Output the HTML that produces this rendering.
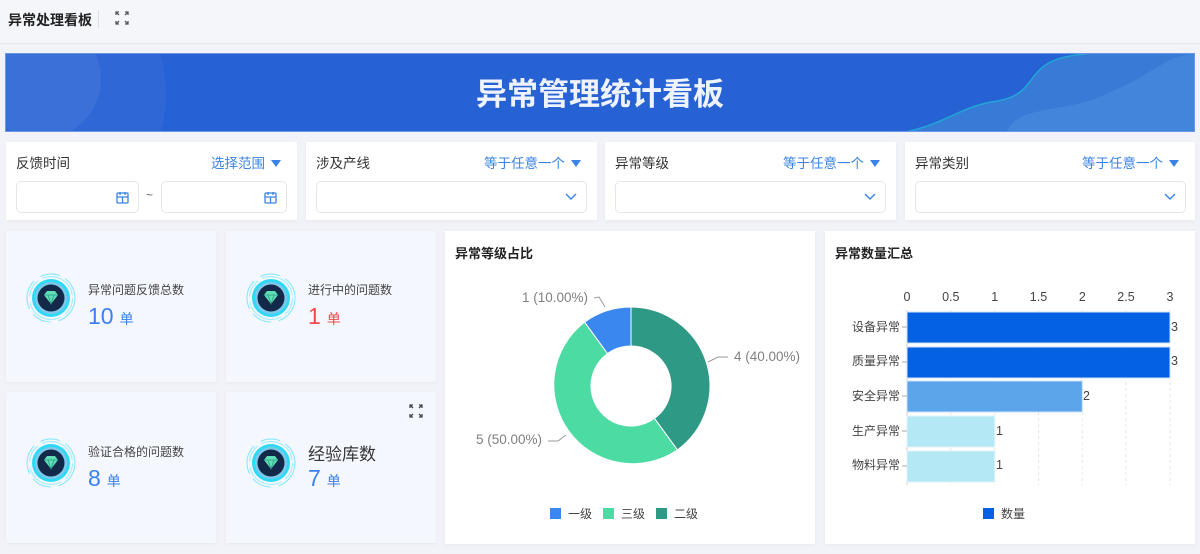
<!DOCTYPE html>
<html><head><meta charset="utf-8"><style>
*{box-sizing:border-box;margin:0;padding:0}
body{width:1200px;height:554px;background:#f2f3f8;font-family:"Liberation Sans","Noto Sans CJK SC",sans-serif;position:relative;overflow:hidden;color:#333}
.abs{position:absolute}
.card{position:absolute;background:#fff;box-shadow:0 1px 4px rgba(0,0,0,.05)}
.stat{background:#f4f8fe}
.ftitle{position:absolute;left:10px;top:10px;font-size:13.5px;color:#333}
.fop{position:absolute;right:16px;top:10px;font-size:13.5px;color:#3a83e6}
.tri{display:inline-block;width:0;height:0;border-left:5px solid transparent;border-right:5px solid transparent;border-top:7px solid #3a83e6;margin-left:6px;vertical-align:1px}
.inp{position:absolute;top:39px;height:32px;border:1px solid #e3e6ec;border-radius:5px;background:#fff}
.lbl{position:absolute;left:82px;font-size:12px;color:#444}
.num{position:absolute;left:82px;font-size:23px;color:#3b7ff0}
.num small{font-size:14px;margin-left:6px}
.ct{position:absolute;left:10px;top:12px;font-size:13px;font-weight:bold;color:#222}
</style></head><body>
<div class="abs" style="left:0;top:0;width:1200px;height:44px;background:#f5f6fa;border-bottom:1px solid #e6e8ee"></div>
<div class="abs" style="left:8px;top:10px;font-size:14px;font-weight:bold;color:#222">异常处理看板</div>
<div class="abs" style="left:98px;top:10px;width:1px;height:18px;background:#e0e0e0"></div>
<svg class="abs" style="left:115px;top:11px" width="14" height="14" viewBox="0 0 14 14" fill="none" stroke="#555" stroke-width="1.3"><path d="M1 4V1h3M1 1l3 3M10 1h3v3M13 1l-3 3M1 10v3h3M1 13l3-3M13 10v3h-3M13 13l-3-3"/></svg>

<div class="abs" style="left:5px;top:53px;width:1190px;height:79px;background:#2762d5;overflow:hidden;border:1px solid #6b98e6">
<svg width="1190" height="79" style="position:absolute;left:0;top:0">
<circle cx="35" cy="25" r="60" fill="#ffffff" opacity=".06"/>
<circle cx="30" cy="40" r="130" fill="#ffffff" opacity=".04"/>
<path d="M895 79C940 70 950 55 985 48C1040 42 1010 5 1080 0L1190 0L1190 79Z" fill="#3b7ed6" opacity=".9"/>
<path d="M895 79C940 70 950 55 985 48C1040 42 1010 5 1080 0" stroke="#21a6d6" stroke-width="1.5" fill="none"/>
<path d="M1000 79C1010 50 1060 60 1100 40C1150 20 1160 0 1190 0L1190 79Z" fill="#4a8ee0" opacity=".6"/>
</svg>
<div class="abs" style="left:0;width:100%;top:15px;text-align:center;font-size:31px;font-weight:bold;color:#eef3ff">异常管理统计看板</div>
</div>

<div class="card" style="left:6px;top:142px;width:291px;height:78px">
<div class="ftitle">反馈时间</div><div class="fop">选择范围<span class="tri"></span></div>
<div class="inp" style="left:10px;width:123px"><svg class="abs" style="right:9px;top:9px" width="13" height="13" viewBox="0 0 13 13" fill="none" stroke="#3a83e6" stroke-width="1.3"><rect x="1" y="2" width="11" height="10" rx="1"/><path d="M1 6h11M4 1v3M9 1v3M6.5 6v6"/></svg></div>
<div class="abs" style="left:140px;top:46px;font-size:12px;color:#666">~</div>
<div class="inp" style="left:155px;width:126px"><svg class="abs" style="right:9px;top:9px" width="13" height="13" viewBox="0 0 13 13" fill="none" stroke="#3a83e6" stroke-width="1.3"><rect x="1" y="2" width="11" height="10" rx="1"/><path d="M1 6h11M4 1v3M9 1v3M6.5 6v6"/></svg></div>
</div>
<div class="card" style="left:306px;top:142px;width:291px;height:78px">
<div class="ftitle">涉及产线</div><div class="fop">等于任意一个<span class="tri"></span></div>
<div class="inp" style="left:10px;width:271px"><svg class="abs" style="right:9px;top:11px" width="12" height="8" viewBox="0 0 12 8" fill="none" stroke="#3a83e6" stroke-width="1.4"><path d="M1 1l5 5 5-5"/></svg></div>
</div>
<div class="card" style="left:605px;top:142px;width:291px;height:78px">
<div class="ftitle">异常等级</div><div class="fop">等于任意一个<span class="tri"></span></div>
<div class="inp" style="left:10px;width:271px"><svg class="abs" style="right:9px;top:11px" width="12" height="8" viewBox="0 0 12 8" fill="none" stroke="#3a83e6" stroke-width="1.4"><path d="M1 1l5 5 5-5"/></svg></div>
</div>
<div class="card" style="left:905px;top:142px;width:290px;height:78px">
<div class="ftitle">异常类别</div><div class="fop">等于任意一个<span class="tri"></span></div>
<div class="inp" style="left:10px;width:271px"><svg class="abs" style="right:9px;top:11px" width="12" height="8" viewBox="0 0 12 8" fill="none" stroke="#3a83e6" stroke-width="1.4"><path d="M1 1l5 5 5-5"/></svg></div>
</div>

<svg width="0" height="0" style="position:absolute"><defs>
<g id="ic">
<circle cx="0" cy="0" r="24" fill="none" stroke="#7fe6fb" stroke-width="1" stroke-dasharray="30 8 20 6"/>
<circle cx="0" cy="0" r="21.5" fill="none" stroke="#a8eefc" stroke-width="1.2" stroke-dasharray="18 5 40 6"/>
<circle cx="0" cy="0" r="19" fill="#2fd9f5"/>
<circle cx="0" cy="0" r="16" fill="#7fc8ea"/>
<circle cx="0" cy="0" r="13.5" fill="#12294a"/>
<path d="M-7-3l3-4h8l3 4-7 9z" fill="#5fe0b4"/>
<path d="M-7-3h14M-3-3l3 9 3-9" stroke="#2a9c88" stroke-width=".8" fill="none"/>
</g></defs></svg>

<div class="card stat" style="left:6px;top:231px;width:210px;height:151px">
<svg class="abs" style="left:19px;top:41px" width="52" height="52"><use href="#ic" x="26" y="26"/></svg>
<div class="lbl" style="top:50px">异常问题反馈总数</div>
<div class="num" style="top:72px">10<small>单</small></div>
</div>
<div class="card stat" style="left:226px;top:231px;width:210px;height:151px">
<svg class="abs" style="left:19px;top:41px" width="52" height="52"><use href="#ic" x="26" y="26"/></svg>
<div class="lbl" style="top:50px">进行中的问题数</div>
<div class="num" style="top:72px;color:#ef4b4b">1<small>单</small></div>
</div>
<div class="card stat" style="left:6px;top:392px;width:210px;height:151px">
<svg class="abs" style="left:19px;top:45px" width="52" height="52"><use href="#ic" x="26" y="26"/></svg>
<div class="lbl" style="top:51px">验证合格的问题数</div>
<div class="num" style="top:73px">8<small>单</small></div>
</div>
<div class="card stat" style="left:226px;top:392px;width:210px;height:151px">
<svg class="abs" style="left:183px;top:12px" width="14" height="14" viewBox="0 0 14 14" fill="none" stroke="#444" stroke-width="1.3"><path d="M1 4V1h3M1 1l3 3M10 1h3v3M13 1l-3 3M1 10v3h3M1 13l3-3M13 10v3h-3M13 13l-3-3"/></svg>
<svg class="abs" style="left:19px;top:45px" width="52" height="52"><use href="#ic" x="26" y="26"/></svg>
<div class="lbl" style="top:48px;font-size:17px;color:#333">经验库数</div>
<div class="num" style="top:73px">7<small>单</small></div>
</div>

<div class="card" style="left:445px;top:231px;width:370px;height:313px">
<div class="ct">异常等级占比</div>
<svg class="abs" style="left:0;top:0" width="370" height="313">
<g transform="translate(186,155)">
<path d="M0-79A79 79 0 0 1 46.4 63.9L23.5 32.4A40 40 0 0 0 0-40Z" fill="#2e9a86" stroke="#fff" stroke-width="1"/>
<path d="M46.4 63.9A79 79 0 0 1-46.4-63.9L-23.5-32.4A40 40 0 0 0 23.5 32.4Z" fill="#4cdba2" stroke="#fff" stroke-width="1"/>
<path d="M-46.4-63.9A79 79 0 0 1 0-79L0-40A40 40 0 0 0-23.5-32.4Z" fill="#3a87f0" stroke="#fff" stroke-width="1"/>
</g>
<path d="M149 67l5-1 6 10" stroke="#999" fill="none"/>
<path d="M263 131l10-5h10" stroke="#999" fill="none"/>
<path d="M103 210h10l8-6" stroke="#999" fill="none"/>
<g font-size="13.5" fill="#808080" font-family="Liberation Sans,sans-serif">
<text x="77" y="71">1 (10.00%)</text>
<text x="289" y="130">4 (40.00%)</text>
<text x="31" y="213">5 (50.00%)</text>
</g>
<rect x="105" y="277" width="11" height="11" fill="#3a87f0"/><text x="123" y="287" font-size="12" fill="#444">一级</text>
<rect x="158" y="277" width="11" height="11" fill="#4cdba2"/><text x="176" y="287" font-size="12" fill="#444">三级</text>
<rect x="211" y="277" width="11" height="11" fill="#2e9a86"/><text x="229" y="287" font-size="12" fill="#444">二级</text>
</svg>
</div>

<div class="card" style="left:825px;top:231px;width:370px;height:313px">
<div class="ct">异常数量汇总</div>
<svg class="abs" style="left:0;top:0" width="370" height="313">
<g stroke="#e6e6e6" stroke-dasharray="3 3">
<path d="M125.8 79v175M169.7 79v175M213.5 79v175M257.3 79v175M301 79v175M345 79v175"/>
</g>
<path d="M82 79v175" stroke="#ccc"/>
<g font-size="12.5" fill="#444" text-anchor="middle">
<text x="82" y="70">0</text><text x="125.8" y="70">0.5</text><text x="169.7" y="70">1</text><text x="213.5" y="70">1.5</text><text x="257.3" y="70">2</text><text x="301" y="70">2.5</text><text x="345" y="70">3</text>
</g>
<rect x="82" y="81" width="263" height="31" fill="#0561e4" stroke="#cfe0f8"/>
<rect x="82" y="116" width="263" height="31" fill="#0561e4" stroke="#cfe0f8"/>
<rect x="82" y="150" width="175.3" height="31" fill="#5ca5ea" stroke="#cfe0f8"/>
<rect x="82" y="185" width="87.7" height="31" fill="#b5e8f5" stroke="#dff2fa"/>
<rect x="82" y="220" width="87.7" height="31" fill="#b5e8f5" stroke="#dff2fa"/>
<g font-size="12" fill="#444" text-anchor="end">
<text x="75" y="100">设备异常</text><text x="75" y="134">质量异常</text><text x="75" y="169">安全异常</text><text x="75" y="204">生产异常</text><text x="75" y="238">物料异常</text>
</g>
<g stroke="#aaa"><path d="M77 96h5M77 131h5M77 165h5M77 200h5M77 235h5"/></g>
<g font-size="12.5" fill="#444">
<text x="346" y="100">3</text><text x="346" y="134">3</text><text x="258" y="169">2</text><text x="171" y="204">1</text><text x="171" y="238">1</text>
</g>
<rect x="158" y="277" width="11" height="11" fill="#0561e4"/><text x="176" y="287" font-size="12" fill="#444">数量</text>
</svg>
</div>
</body></html>
